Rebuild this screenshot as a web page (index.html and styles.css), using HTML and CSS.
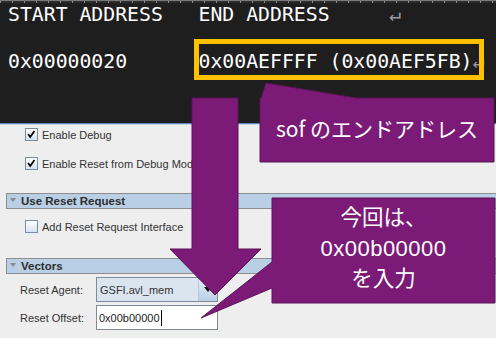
FILE: index.html
```html
<!DOCTYPE html>
<html>
<head>
<meta charset="utf-8">
<link rel="stylesheet" href="styles.css">
</head>
<body>
<div class="page">
  <div class="term">
    <div class="ruler"></div>
    <div class="tl tl1">START ADDRESS   END ADDRESS     <span class="eol">↵</span></div>
    <div class="tl tl2">0x00000020      0x00AEFFFF (0x00AEF5FB)<span class="eol">↵</span></div>
  </div>
  <div class="props">
    <div class="cb-row r1"><span class="cb"><svg viewBox="0 0 13 13" width="11" height="11"><polyline points="2.5,6 5,9.5 10,2.5" fill="none" stroke="#000" stroke-width="2"/></svg></span><span>Enable Debug</span></div>
    <div class="cb-row r2"><span class="cb"><svg viewBox="0 0 13 13" width="11" height="11"><polyline points="2.5,6 5,9.5 10,2.5" fill="none" stroke="#000" stroke-width="2"/></svg></span><span>Enable Reset from Debug Module</span></div>
    <div class="sec s1"><span class="tri"></span>Use Reset Request</div>
    <div class="cb-row r3"><span class="cb"></span><span>Add Reset Request Interface</span></div>
    <div class="sec s2"><span class="tri"></span>Vectors</div>
    <div class="form">
      <span class="lbl">Reset Agent:</span>
      <div class="combo"><span class="combo-text">GSFI.avl_mem</span><span class="combo-btn"><span class="darr"></span></span></div>
      <span class="lbl">Reset Offset:</span>
      <div class="field">0x00b00000<span class="caret"></span></div>
    </div>
  </div>

  <div class="hl"></div>

  <svg class="annot" width="496" height="338" viewBox="0 0 496 338">
    <polygon points="192,98 238,98 238,249 261,249 215,295 170,249 192,249" fill="#7b1a77" stroke="#5e1259" stroke-width="1"/>
    <polygon points="261,98 266,83 356,98 494,98 494,162 260,162 260,98" fill="#7b1a77" stroke="#5e1259" stroke-width="1"/>
    <polygon points="272,198 495,198 495,303 272,303 272,288 201,318 272,262" fill="#7b1a77" stroke="#5e1259" stroke-width="1"/>
  </svg>

  <div class="note n1">sof のエンドアドレス</div>
  <div class="note n2">
    <div class="nl first">今回は、</div>
    <div class="nl num">0x00b00000</div>
    <div class="nl">を入力</div>
  </div>
</div>
</body>
</html>
```

FILE: styles.css
```css
html, body {
  margin: 0;
  padding: 0;
}
body {
  width: 496px;
  height: 338px;
  overflow: hidden;
  background: #eeeeee;
}
.page {
  position: relative;
  width: 496px;
  height: 338px;
  overflow: hidden;
  font-family: "Liberation Sans", Arial, sans-serif;
}

/* terminal-like dark panel */
.term {
  height: 123px;
  background: #1e1e1e;
  color: #ffffff;
  font-family: "DejaVu Sans Mono", "Liberation Mono", monospace;
  font-size: 19.8px;
  line-height: 24px;
  border-bottom: 1px solid #5b86b5;
  box-shadow: 0 1px 0 #c3d6ea;
}
.ruler {
  height: 3px;
  background:
    repeating-linear-gradient(90deg, #8a8a8a 0 1px, transparent 1px 12px),
    #2c2c2c;
  border-top: 1px solid #7a7a7a;
  box-sizing: border-box;
}
.tl {
  white-space: pre;
  padding-left: 8px;
}
.tl2 {
  margin-top: 23px;
}
.eol {
  color: #9a9a9a;
}

/* properties panel */
.props {
  padding-top: 4px;
  color: #333333;
  font-size: 11px;
}
.cb-row {
  display: flex;
  align-items: center;
  gap: 4px;
  height: 13px;
  padding-left: 25px;
  white-space: nowrap;
}
.r2 { margin-top: 16px; }
.r3 { margin-top: 11px; }
.cb {
  width: 13px;
  height: 13px;
  box-sizing: border-box;
  border: 1px solid #7d8c9c;
  background: linear-gradient(#ffffff, #d6e2ef);
  display: flex;
  align-items: center;
  justify-content: center;
  flex: none;
}
.sec {
  display: flex;
  align-items: center;
  height: 16px;
  box-sizing: border-box;
  margin-left: 6px;
  margin-right: -10px;
  border: 1px solid #8e8e8e;
  background: #b8cfe5;
  font-weight: bold;
  font-size: 11.5px;
  color: #2e2e2e;
  gap: 5px;
  padding-left: 3px;
}
.s1 { margin-top: 23px; }
.s2 { margin-top: 25px; }
.tri {
  width: 0;
  height: 0;
  border-left: 3px solid transparent;
  border-right: 3px solid transparent;
  border-top: 4px solid #8a8a8a;
  margin-top: -3px;
}
.form {
  display: grid;
  grid-template-columns: 76px 122px;
  row-gap: 3px;
  padding-left: 20px;
  margin-top: 3px;
  align-items: center;
}
.lbl {
  font-size: 11px;
  color: #333333;
}
.combo {
  display: flex;
  height: 25px;
  box-sizing: border-box;
  border: 1px solid #7d8c9c;
  background: #dbe5ef;
}
.combo-text {
  flex: 1;
  display: flex;
  align-items: center;
  padding-left: 3px;
  font-size: 11px;
  color: #333;
  border-right: 1px solid #b9c6d3;
}
.combo-btn {
  width: 18px;
  display: flex;
  align-items: center;
  justify-content: center;
  background: linear-gradient(#e6eef6, #b8cfe5);
}
.darr {
  width: 0;
  height: 0;
  border-left: 4px solid transparent;
  border-right: 4px solid transparent;
  border-top: 5px solid #111;
}
.field {
  height: 25px;
  box-sizing: border-box;
  border: 1px solid #7d8c9c;
  background: #ffffff;
  display: flex;
  align-items: center;
  padding-left: 2px;
  font-size: 11px;
  color: #222;
}
.caret {
  width: 1px;
  height: 16px;
  background: #000;
  margin-left: 1px;
}

/* annotations */
.hl {
  position: absolute;
  left: 194px;
  top: 39px;
  width: 290px;
  height: 41px;
  box-sizing: border-box;
  border: 5px solid #ffc000;
}
.annot {
  position: absolute;
  left: 0;
  top: 0;
}
.note {
  position: absolute;
  color: #ffffff;
  font-family: "Noto Sans CJK JP", "Noto Sans", sans-serif;
  text-align: center;
  white-space: nowrap;
}
.n1 {
  left: 260px;
  top: 116px;
  width: 234px;
  font-size: 21px;
  line-height: 25px;
}
.n2 {
  left: 272px;
  top: 202px;
  width: 223px;
  font-size: 21.5px;
  line-height: 28px;
}
.n2 .first {
  margin-bottom: 5px;
}
.n2 .num {
  font-family: "Liberation Sans", Arial, sans-serif;
  font-size: 22px;
  letter-spacing: 0.5px;
}
```
